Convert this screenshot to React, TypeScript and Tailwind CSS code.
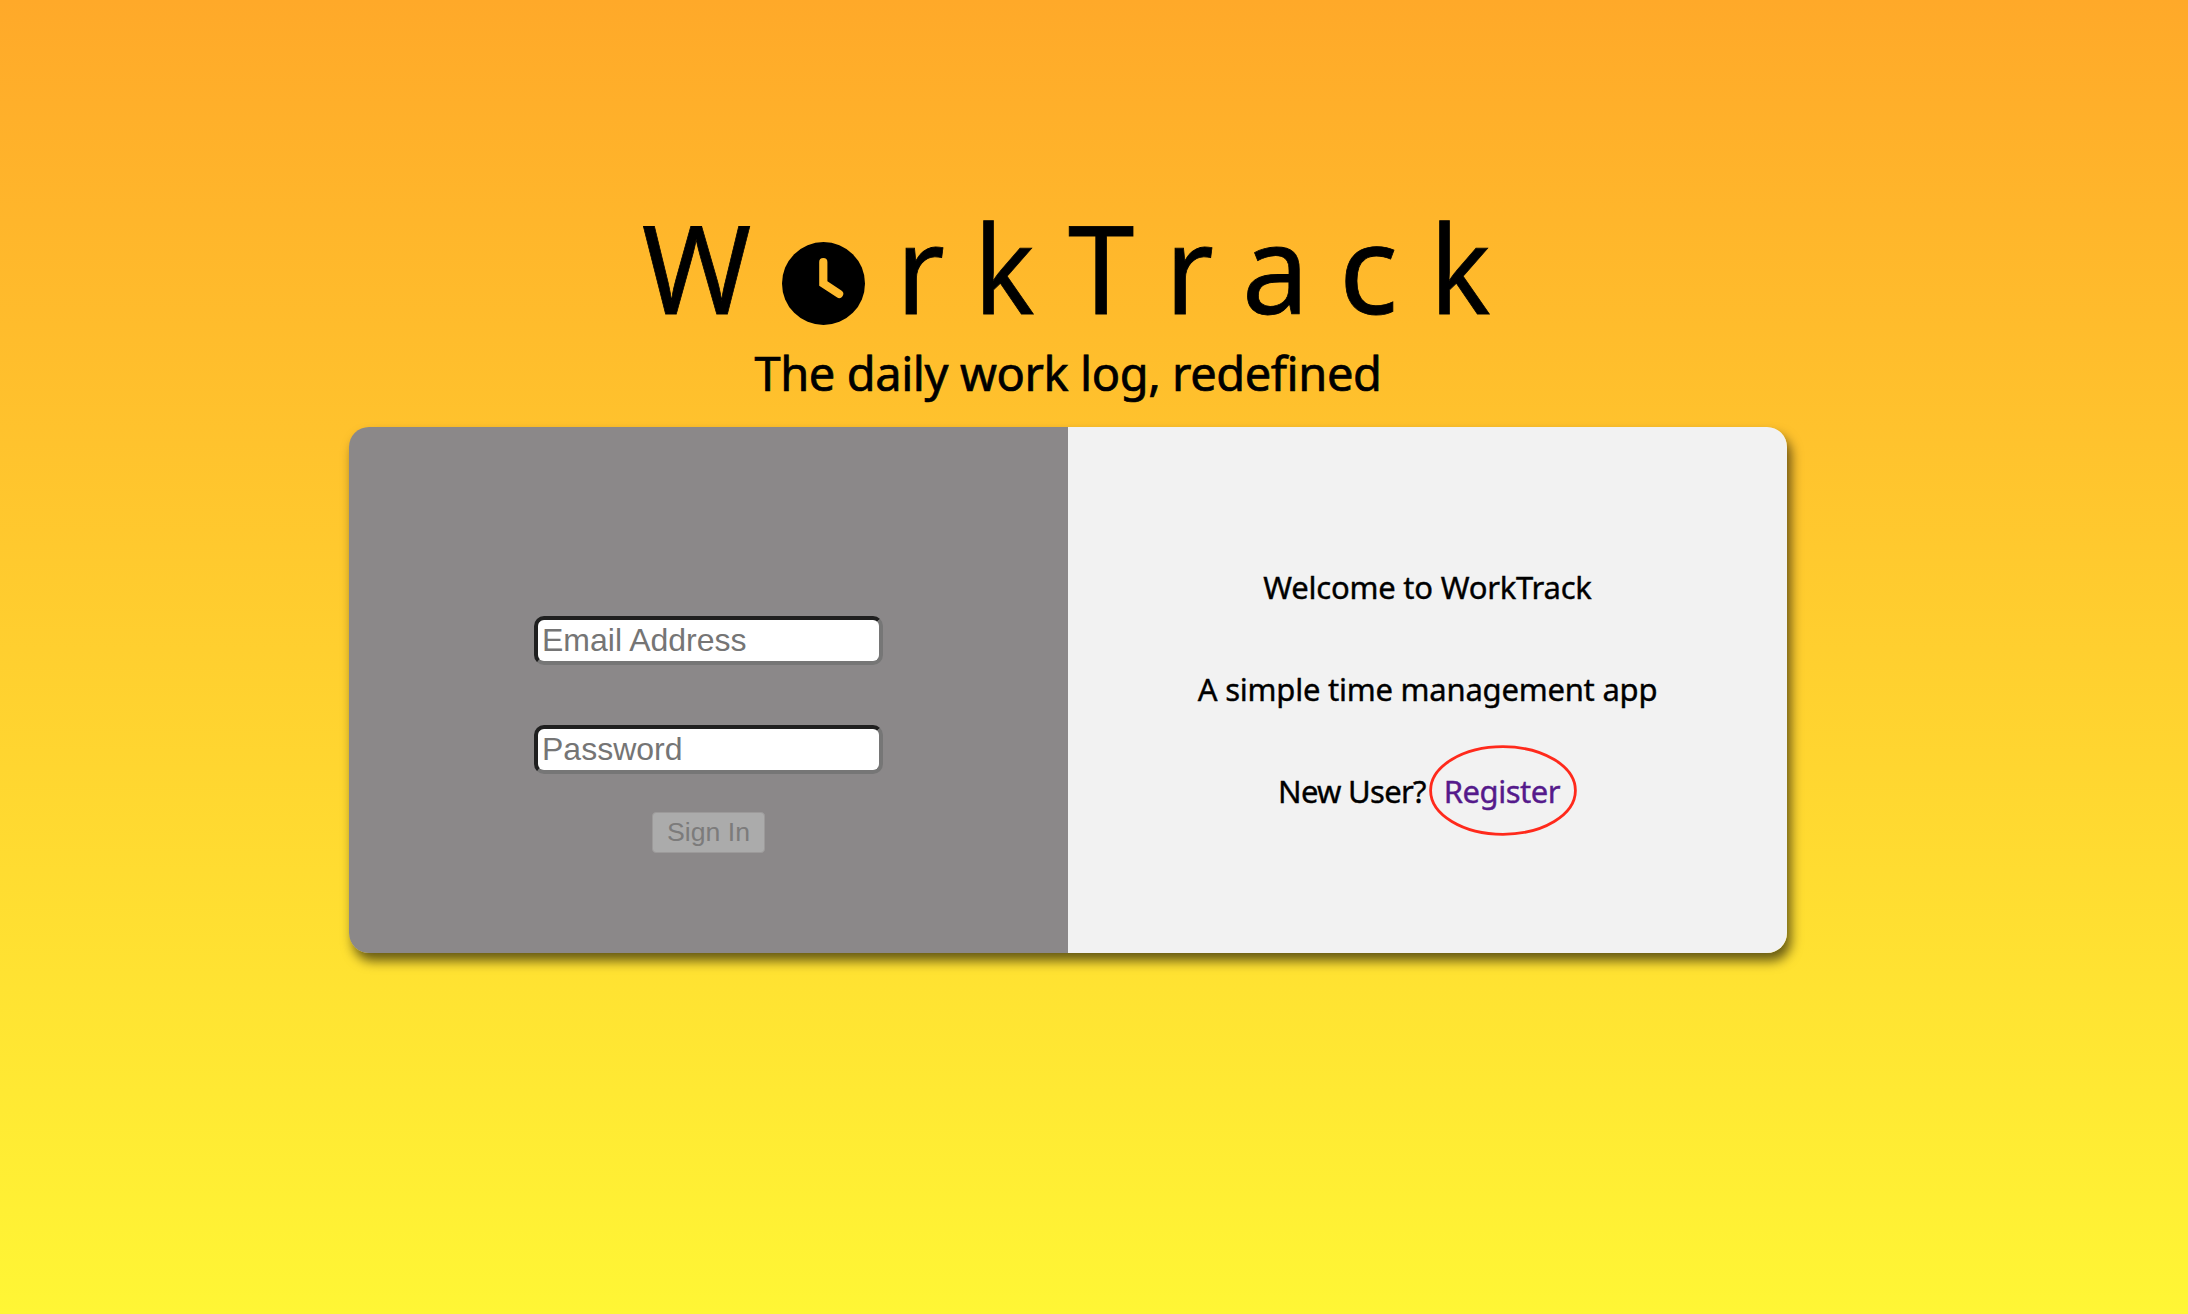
const letters = [
  { id: 'r1', ch: 'r', w: 'w-[77.5px]', sx: 'scale-x-[0.96]' },
  { id: 'k1', ch: 'k', w: 'w-[94px]', sx: 'scale-x-[0.92]' },
  { id: 't', ch: 'T', w: 'w-[97.5px]', sx: 'scale-x-[0.97]' },
  { id: 'r2', ch: 'r', w: 'w-[77px]', sx: 'scale-x-[0.96]' },
  { id: 'a', ch: 'a', w: 'w-[97px]', sx: 'scale-x-[0.97]' },
  { id: 'c', ch: 'c', w: 'w-[91px]', sx: 'scale-x-100' },
  { id: 'k2', ch: 'k', w: 'w-[61px]', sx: 'scale-x-[0.92]' },
];

function Clock() {
  return (
    <svg viewBox="0 0 83 83" className="mr-[31px] mt-[50px] h-[83px] w-[83px] shrink-0">
      <circle cx="41.5" cy="41.5" r="41.5" fill="#000" />
      <path d="M41.3 20v21.5l15.8 10.4" fill="none" stroke="#ffba2c" strokeWidth="8.2" strokeLinecap="round" strokeLinejoin="miter" />
    </svg>
  );
}

const field =
  'block h-[49px] w-[349px] rounded-[10px] border-4 border-t-[#1f1f1f] border-l-[#1f1f1f] border-r-[#767676] border-b-[#767676] bg-white px-[4px] py-0 text-[32px] leading-[37px] placeholder:text-[#757575] font-["Liberation_Sans",sans-serif]';

export default function App() {
  return (
    <main className="h-[1314px] w-[2188px] overflow-hidden bg-[linear-gradient(180deg,#ffa929,#fff635)] font-['Noto_Sans',sans-serif] text-black">
      <h1 className="mt-[192px] flex h-[148px] pl-[642px] text-[123px] leading-[150px] [-webkit-text-stroke:0.8px_black]" aria-label="WorkTrack">
        <span className="w-[140px] shrink-0"><span className="inline-block origin-left scale-x-[0.955]">W</span></span>
        <Clock />
        {letters.map((l) => (
          <span key={l.id} className={`${l.w} shrink-0`}>
            <span className={`${l.sx} inline-block origin-left`}>{l.ch}</span>
          </span>
        ))}
      </h1>
      <p className="ml-[349px] h-[87px] w-[1438px] text-center text-[47px] leading-[67px] tracking-[-0.42px] whitespace-nowrap [-webkit-text-stroke:0.7px_black]">The daily work log, redefined</p>
      <section className="ml-[349px] flex h-[526px] w-[1438px] overflow-hidden rounded-[20px] shadow-[4px_8px_12px_rgba(0,0,0,0.6)]">
        <form className="flex w-[719px] flex-col items-center bg-[#8b8889] pt-[189px]">
          <input className={field} placeholder="Email Address" />
          <input className={`${field} mt-[60px]`} type="password" placeholder="Password" />
          <button type="button" disabled className="mt-[38px] h-[41px] w-[113px] rounded-[4px] border border-[#9c9a9a] bg-[#ababab] font-['Liberation_Sans',sans-serif] text-[26.67px] leading-[37px] text-[#7c7b7b]">Sign In</button>
        </form>
        <div className="flex w-[719px] flex-col items-center gap-[62px] bg-[#f2f2f2] pt-[140px] text-[31px] leading-[40px] tracking-[-0.23px] whitespace-nowrap [-webkit-text-stroke:0.4px_currentColor]">
          <p>Welcome to WorkTrack</p>
          <p>A simple time management app</p>
          <p className="mr-[17px] flex">
            <span className="mr-[18px] tracking-[-0.7px]">New User?</span>
            <a href="#register" className="relative tracking-[-0.5px] text-[#551a8b]">
              Register
              <svg viewBox="0 0 148 91" className="pointer-events-none absolute top-[-26px] left-[-15px] h-[91px] w-[148px]">
                <ellipse cx="74" cy="45.5" rx="72.4" ry="43.8" fill="none" stroke="#ff2a1c" strokeWidth="2.8" />
              </svg>
            </a>
          </p>
        </div>
      </section>
    </main>
  );
}
